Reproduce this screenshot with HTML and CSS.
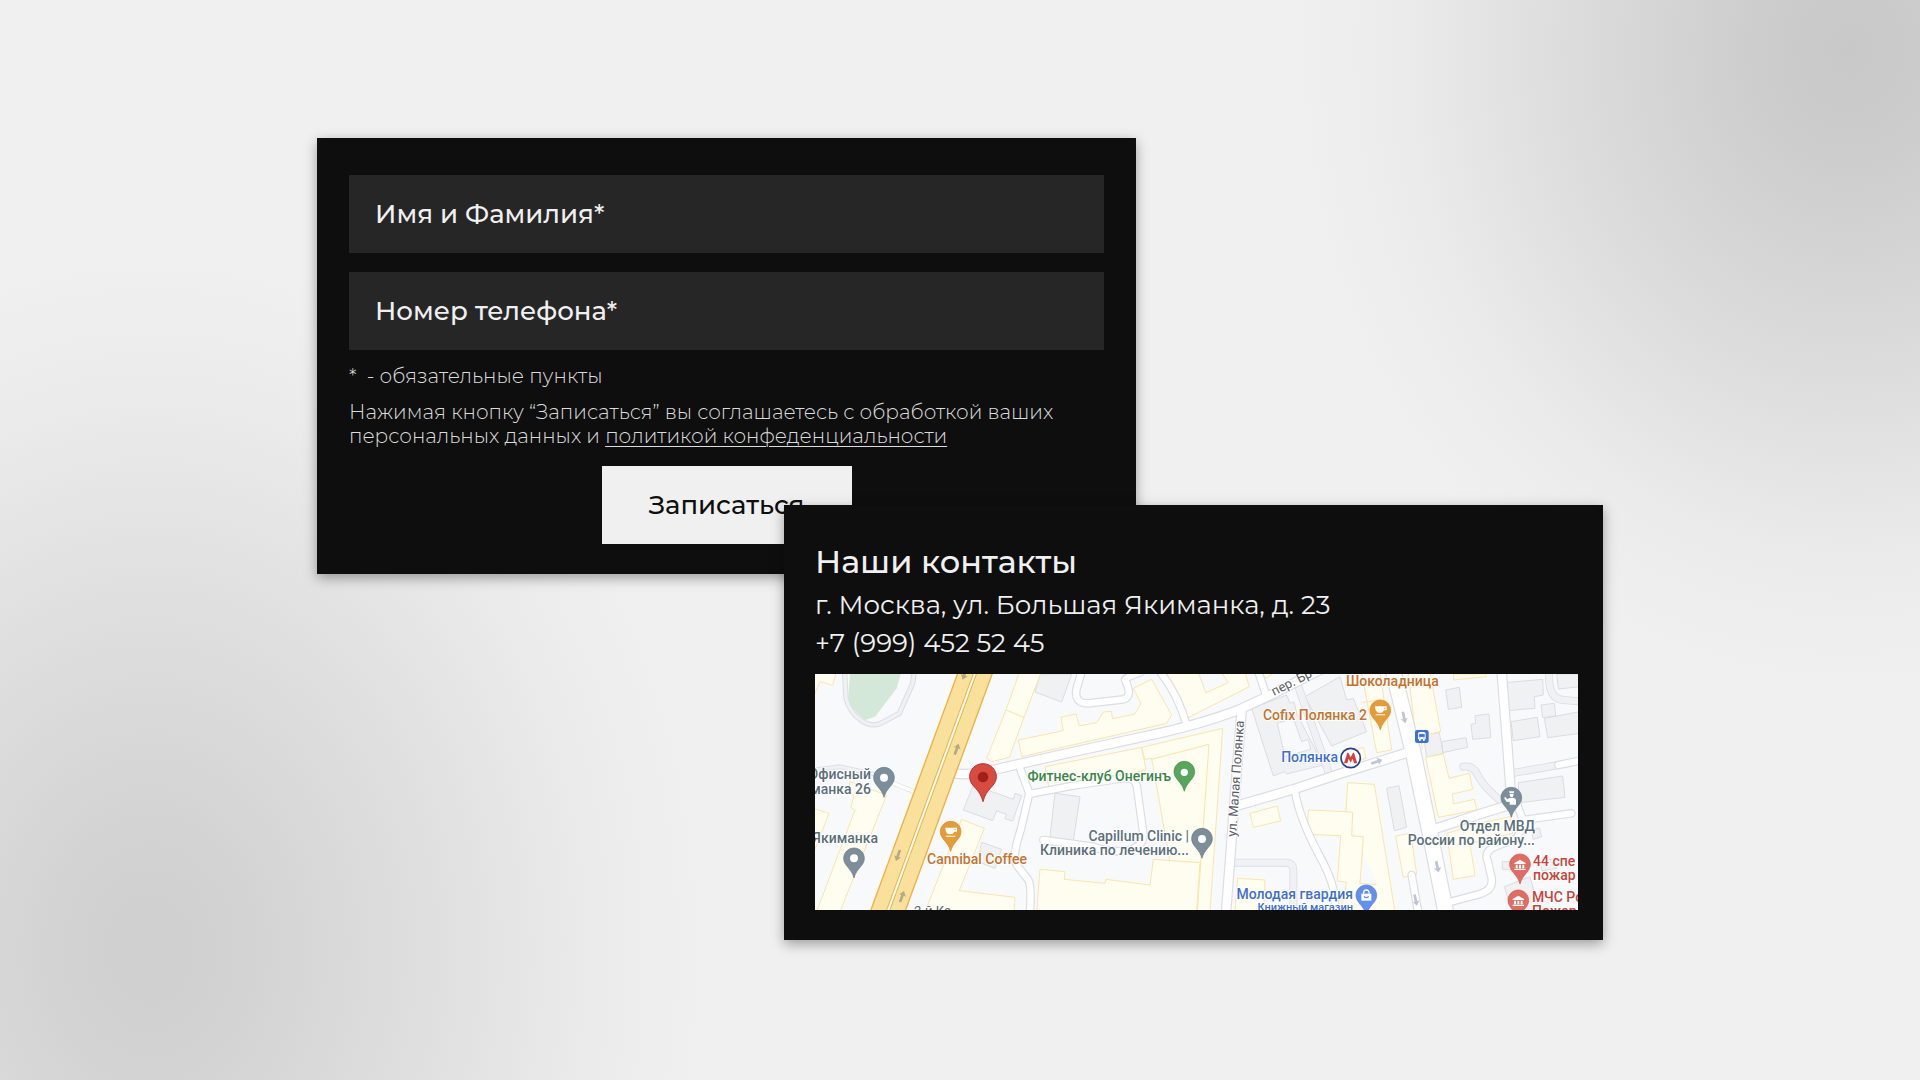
FILE: index.html
```html
<!DOCTYPE html>
<html lang="ru">
<head>
<meta charset="utf-8">
<meta name="viewport" content="width=device-width, initial-scale=1">
<title>Запись и контакты</title>
<link rel="stylesheet" href="styles.css">
</head>
<body>
<main class="stage">
  <form class="card card-form">
    <input class="field" type="text" name="name" placeholder="Имя и Фамилия*" aria-label="Имя и Фамилия" required>
    <input class="field" type="tel" name="phone" placeholder="Номер телефона*" aria-label="Номер телефона" required>
    <p class="note">*&nbsp; - обязательные пункты</p>
    <p class="consent">Нажимая кнопку “Записаться” вы соглашаетесь с обработкой ваших<br>персональных данных и <a class="link" href="#policy">политикой конфеденциальности</a></p>
    <button class="submit" type="submit">Записаться</button>
  </form>

  <section class="card card-contacts">
    <h2 class="title">Наши контакты</h2>
    <p class="contact">г. Москва, ул. Большая Якиманка, д. 23</p>
    <p class="contact">+7 (999) 452 52 45</p>
    <svg class="map" viewBox="0 0 763 236" role="img" aria-label="Карта проезда">
      <defs>
        <path id="pin" d="M0-31C-17-31-31-17-31 0C-31 23-7 30 0 59C7 30 31 23 31 0C31-17 17-31 0-31Z"/>
        <path id="arrow" d="M0-18L11-3L4-5V17H-4V-5L-11-3Z"/>
        <path id="cup" fill-rule="evenodd" d="M-16-12H19V0H11Q8 8-1 8Q-16 8-16-12ZM12-8V-4H15V-8ZM-14 12H14V15H-14Z"/>
        <path id="museum" d="M-17-6L0-16L17-6V-3H-17ZM-13-1H-7V10H-13ZM-3-1H3V10H-3ZM7-1H13V10H7ZM-17 11H17V15H-17Z"/>
      </defs>
      <rect class="land" width="763" height="236"/>
      <g transform="translate(-5 -4) scale(.33333)">
        <path class="park" d="M120 12L115 80Q118 115 165 150L195 140L260 55L272 12Z"/>
        <g class="block">
          <path d="M690 12H785L755 96L675 66Z"/>
          <path d="M490 345L610 388L615 370L635 377L608 453L585 446L590 434L560 422L548 452L460 420Z"/>
          <path d="M515 517L575 538L555 595L503 575Z"/>
          <path d="M735 370L810 380L790 512L720 500Z"/>
          <path d="M1325 115L1430 75L1440 100L1452 95L1460 130L1540 285L1430 312L1422 305L1390 318Z"/>
          <path d="M1485 80L1590 20L1610 90L1630 85L1670 185L1565 228Z"/>
          <path d="M1907 60L1948 52L1955 112L1915 118ZM1995 137L2037 132L2042 203L1988 208L1983 163L1997 160ZM2085 38L2198 28L2200 75L2173 80L2175 115L2092 122ZM2103 155L2182 142L2190 200L2110 212ZM2193 105L2233 100L2237 138L2198 143ZM2203 145L2310 125V190L2213 203ZM2240 12H2310V50L2245 57ZM2125 338L2258 318L2265 382L2128 398ZM1730 355L1767 347L1790 472L1753 482ZM1840 195L1888 188L1900 250L1850 262ZM1895 215L1968 203L1973 232L1898 248ZM2077 575H2130V598H2077ZM2083 650L2160 620L2190 722H2105ZM2165 480L2188 474L2195 500L2170 508ZM2190 575L2235 565L2240 595L2196 602Z"/>
        </g>
        <path class="yard" d="M1402 160L1450 145L1475 215L1495 208L1502 238L1425 260Z"/>
        <g class="shop">
          <path d="M10 8H78L68 46L30 35L10 80Z"/>
          <path d="M10 415L57 430L10 550ZM120 335L230 375L90 725H20L135 420L122 412L132 378L115 360Z"/>
          <path d="M455 448L523 475L448 662L615 682L612 725H345Z"/>
          <path d="M628 8H693L642 142L598 262L545 275L530 265L588 120ZM588 120L642 142"/>
          <path d="M625 210L760 182L753 142L798 132L808 168L860 158L880 126L904 124L908 146L975 132L993 100L970 55L1025 28L1085 135L1070 160L635 260Z"/>
          <path d="M705 290L995 232L1008 300L718 358Z"/>
          <path d="M995 232L1238 175L1200 725H1160L1162 580L1080 575L1025 265L1004 268ZM1025 268L1197 223L1162 725"/>
          <path d="M690 598L765 605L763 628L885 640L888 628L1020 645L1030 568L1170 578L1160 725H680Z"/>
          <path d="M1065 8H1305L1318 50L1130 145ZM1165 8L1188 68L1255 38L1235 8"/>
          <path d="M1355 8H1390L1368 25Z"/>
          <path d="M1655 8H1710L1745 240L1700 248ZM1655 98L1705 90"/>
          <path d="M1795 8H1860L1892 184L1832 200L1837 236L1822 240Z"/>
          <path d="M1640 240L1660 232L1668 265L1640 272Z"/>
          <path d="M1320 430L1402 408L1412 453L1330 472Z"/>
          <path d="M1495 420L1608 425L1613 338L1693 343L1755 725H1590L1610 637L1582 633L1592 497L1492 493ZM1608 425L1628 427L1625 498L1660 500L1650 640L1700 644"/>
          <path d="M1283 625L1365 630L1362 725H1275Z"/>
          <path d="M1847 262L1900 252L1917 325L1978 310L1988 358L1927 372L1930 402L1993 388L2000 420L1885 442Z"/>
          <path d="M1757 498L1802 490L1820 612L1780 622ZM1910 490L2030 455L2100 440L2108 490L1980 520L1995 617L1930 628ZM1930 12H2028V20L1932 30Z"/>
        </g>
        <g class="lane-edge" stroke-width="24">
          <path d="M104 8L108 85Q120 130 155 152Q190 175 220 156L268 130L308 40L312 8" stroke-width="16"/>
          <path d="M10 300L90 290L190 312" stroke-width="14"/>
          <path d="M1465 50L1555 305M1275 578H1430Q1450 580 1450 600V725M1960 290Q1990 285 2003 315T2080 400M2218 8Q2212 85 2260 90L2310 94M2115 308L2245 285"/>
        </g>
        <g class="lane" stroke-width="19">
          <path d="M104 8L108 85Q120 130 155 152Q190 175 220 156L268 130L308 40L312 8" stroke-width="10"/>
          <path d="M10 300L90 290L190 312" stroke-width="9"/>
          <path d="M1465 50L1555 305M1275 578H1430Q1450 580 1450 600V725M1960 290Q1990 285 2003 315T2080 400M2218 8Q2212 85 2260 90L2310 94M2115 308L2245 285"/>
        </g>
        <g class="road-edge">
          <path stroke-width="32" d="M440 311Q480 317 570 295L780 248L1000 200Q1170 165 1290 118L1380 76L1540 -5M1295 120L1273 400L1248 730M1285 406L1450 358L1600 308L1710 274L1800 245M2075 5L2090 200L2105 400M1880 475L2010 432L2120 398"/>
          <path stroke-width="26" d="M815 5L800 55Q790 100 835 100L940 88Q970 80 945 30Q945 22 990 8M1050 5Q1105 75 1130 165M630 295L658 370L632 480Q605 560 620 585L655 630Q665 645 660 730M658 372L800 345L940 325Q980 320 982 360L1000 490Q1003 525 960 540Q900 550 850 530L700 510M1345 5L1370 80M1455 365Q1470 450 1530 560T1570 730M2140 450L2284 430M1920 696L2010 672Q2050 660 2045 625L2030 560Q2028 540 2060 528L2120 505L2142 460L2122 405M1805 615L1825 730M2245 285L2310 272"/>
          <path stroke-width="14" d="M250 340L325 370"/>
          <path stroke-width="51" d="M1750 5L1810 250L1860 490L1908 730"/>
        </g>
        <g class="road">
          <path stroke-width="25" d="M440 311Q480 317 570 295L780 248L1000 200Q1170 165 1290 118L1380 76L1540 -5M1295 120L1273 400L1248 730M1285 406L1450 358L1600 308L1710 274L1800 245M2075 5L2090 200L2105 400M1880 475L2010 432L2120 398"/>
          <path stroke-width="19" d="M815 5L800 55Q790 100 835 100L940 88Q970 80 945 30Q945 22 990 8M1050 5Q1105 75 1130 165M630 295L658 370L632 480Q605 560 620 585L655 630Q665 645 660 730M658 372L800 345L940 325Q980 320 982 360L1000 490Q1003 525 960 540Q900 550 850 530L700 510M1345 5L1370 80M1455 365Q1470 450 1530 560T1570 730M2140 450L2284 430M1920 696L2010 672Q2050 660 2045 625L2030 560Q2028 540 2060 528L2120 505L2142 460L2122 405M1805 615L1825 730M2245 285L2310 272"/>
          <path stroke-width="10" d="M250 340L325 370"/>
          <path stroke-width="44" d="M1750 5L1810 250L1860 490L1908 730"/>
        </g>
        <path class="highway" d="M445 5L182 722H286L549 5Z"/>
        <path class="median-edge" d="M497 5L233 725"/>
        <path class="median" d="M497 5L233 725"/>
        <g class="flow-main">
          <use href="#arrow" transform="translate(464 12) rotate(200)"/>
          <use href="#arrow" transform="translate(440 238) rotate(20)"/>
          <use href="#arrow" transform="translate(264 556) rotate(200)"/>
          <use href="#arrow" transform="translate(276 680) rotate(20)"/>
        </g>
        <g class="flow">
          <use href="#arrow" transform="translate(1700 275) rotate(72)"/>
          <use href="#arrow" transform="translate(1782 142) rotate(168)"/>
          <use href="#arrow" transform="translate(1882 590) rotate(168)"/>
          <use href="#arrow" transform="translate(1817 690) rotate(168)"/>
        </g>
        <g class="pin-slate">
          <use href="#pin" x="222" y="323"/><use href="#pin" x="132" y="565"/><use href="#pin" x="1176" y="506"/><use href="#pin" x="2104" y="383"/>
        </g>
        <use class="pin-green" href="#pin" x="1123" y="305"/>
        <g class="pin-orange"><use href="#pin" x="422" y="485"/><use href="#pin" x="1711" y="121"/></g>
        <use class="pin-blue" href="#pin" x="1669" y="676"/>
        <g class="pin-red"><use href="#pin" x="2130" y="583"/><use href="#pin" x="2125" y="691"/></g>
        <g class="glyph">
          <circle cx="222" cy="323" r="12"/><circle cx="132" cy="565" r="12"/><circle cx="1176" cy="507" r="12"/><circle cx="1123" cy="307" r="11"/>
          <use href="#cup" x="422" y="485"/><use href="#cup" x="1711" y="121"/>
          <use href="#museum" x="2130" y="585"/><use href="#museum" x="2125" y="693"/>
          <path d="M2097 364H2113L2111 369H2099ZM2099 371H2111Q2111 382 2105 382T2099 371ZM2098 384H2112Q2118 386 2118 391V404H2099V395L2090 396L2082 384L2086 381L2093 388Z"/>
          <path d="M1654 671H1684V692H1654Z"/>
        </g>
        <path class="bag" d="M1661 671Q1660 660 1669 660T1677 671"/>
        <path class="bag-mark" d="M1662 679Q1669 687 1676 679"/>
        <path class="pin-main" d="M519 281C496 281 479 298 479 320C479 350 510 354 519 395C528 354 559 350 559 320C559 298 541 281 519 281Z"/>
        <circle class="pin-core" cx="519" cy="321" r="16"/>
        <circle class="metro" cx="1622" cy="264" r="29"/>
        <path class="metro-m" d="M1602 280L1612 248H1615L1622 262L1629 248H1632L1642 280H1632L1628 266L1622 278L1616 266L1612 280Z"/>
        <rect class="bus" x="1815" y="180" width="41" height="39" rx="7"/>
        <path class="glyph" d="M1824 191Q1824 186 1830 186H1841Q1847 186 1847 191V208H1844V213H1839V208H1832V213H1827V208H1824Z"/>
        <path class="bus-window" d="M1828 193H1843V200H1828ZM1828 204H1831M1840 204H1843"/>
      </g>
      <g class="label slate">
        <text x="56" y="105" text-anchor="end">Офисный</text>
        <text x="56" y="120" text-anchor="end">Якиманка 26</text>
        <text x="63" y="169" text-anchor="end">Якиманка</text>
        <text x="374" y="167" text-anchor="end">Capillum Clinic |</text>
        <text x="374" y="181" text-anchor="end">Клиника по лечению...</text>
        <text x="720" y="157" text-anchor="end">Отдел МВД</text>
        <text x="720" y="171" text-anchor="end">России по району...</text>
      </g>
      <text class="label green" x="356" y="107" text-anchor="end">Фитнес-клуб Онегинъ</text>
      <g class="label orange">
        <text x="112" y="190">Cannibal Coffee</text>
        <text x="552" y="46" text-anchor="end">Cofix Полянка 2</text>
        <text x="531" y="12">Шоколадница</text>
      </g>
      <g class="label blue">
        <text x="523" y="88" text-anchor="end">Полянка</text>
        <text x="538" y="225" text-anchor="end">Молодая гвардия</text>
        <text class="label-small" x="538" y="237" text-anchor="end">Книжный магазин</text>
      </g>
      <g class="label red">
        <text x="718" y="192">44 спе</text>
        <text x="718" y="206">пожар</text>
        <text x="717" y="228">МЧС Ро</text>
        <text x="717" y="242">Пожар</text>
      </g>
      <g class="label street">
        <text transform="translate(421 163) rotate(-86)">ул. Малая Полянка</text>
        <text transform="translate(459 22) rotate(-27)">пер. Бр</text>
        <text x="99" y="241">2-й Ка</text>
      </g>
    </svg>
  </section>
</main>
</body>
</html>
```
FILE: styles.css
```css
* { box-sizing: border-box; }

body {
  margin: 0;
  min-height: 100vh;
  font-family: "Montserrat", "Inter", sans-serif;
  color: #f0f0f0;
  background:
    radial-gradient(ellipse 560px 640px at 1850px 50px, #c8c8c8 0%, #cccccc 15%, #dcdcdc 50%, #ebebeb 80%, rgba(239, 239, 239, 0) 100%),
    radial-gradient(ellipse 560px 700px at 150px 950px, #cfcfcf 0%, #d2d2d2 15%, #dfdfdf 50%, #ebebeb 80%, rgba(239, 239, 239, 0) 100%),
    #f0f0f0;
}

.stage {
  display: flex;
  flex-direction: column;
  max-width: 1286px;
  margin: 0 auto;
  padding: 138px 0;
}

.card {
  display: flex;
  flex-direction: column;
  width: 100%;
  max-width: 819px;
  background: #0e0e0e;
  box-shadow: 0 4px 12px rgba(0, 0, 0, 0.35);
}

.card-form { padding: 37px 32px 30px; }

.card-contacts {
  position: relative;
  align-self: flex-end;
  margin-top: -69px;
  padding: 36px 25px 30px 31px;
}

.field {
  width: 100%;
  height: 78px;
  margin-bottom: 19px;
  padding: 0 26px;
  border: 0;
  border-radius: 0;
  background: #262626;
  color: #f0f0f0;
  font: 500 26px/36px "Montserrat", "Inter", sans-serif;
}

.field::placeholder { color: #f0f0f0; opacity: 1; }

.note,
.consent {
  margin: 0;
  color: #dcdcdc;
  font-size: 20px;
  font-weight: 300;
  line-height: 24px;
}

.note { margin-bottom: 12px; margin-top: -5px; }

.consent { margin-bottom: 18px; }

.link {
  color: inherit;
  text-decoration-thickness: 1px;
  text-underline-offset: 3px;
}

.submit {
  align-self: center;
  width: 250px;
  height: 78px;
  padding: 0;
  border: 0;
  background: #f0f0f0;
  color: #0e0e0e;
  font: 500 26px/36px "Montserrat", "Inter", sans-serif;
}

.title {
  margin: 0 0 3px;
  font-size: 32px;
  font-weight: 500;
  line-height: 42px;
}

.contact {
  margin: 0;
  font-size: 26px;
  font-weight: 400;
  line-height: 38px;
}

.map {
  display: block;
  width: 100%;
  height: auto;
  margin-top: 12px;
}

.land, .yard { fill: #f8f9fb; }
.park { fill: #d3e8d8; }
.block { fill: #f0f1f3; stroke: #dadce0; stroke-width: 3; }
.yard { stroke: #dadce0; stroke-width: 3; }
.shop { fill: #fffcf0; stroke: #fae5a8; stroke-width: 3; }
.lane, .lane-edge, .road, .road-edge { fill: none; stroke-linecap: round; stroke-linejoin: round; }
.lane { stroke: #f0f1f3; }
.lane-edge, .road-edge { stroke: #dcdde3; }
.road { stroke: #ffffff; }
.highway { fill: #f9e19b; stroke: #ecb244; stroke-width: 4; }
.median-edge { stroke: #ecb244; stroke-width: 12; }
.median { stroke: #ffffff; stroke-width: 6; }
.flow-main { fill: #b5a883; }
.flow { fill: #bfc3d6; }

.pin-slate { fill: #7b8e99; stroke: #657883; stroke-width: 2; }
.pin-green { fill: #56a65b; stroke: #3f8e48; stroke-width: 2; }
.pin-orange { fill: #e69c36; stroke: #d5892a; stroke-width: 2; }
.pin-blue { fill: #6290f0; stroke: #4b78dd; stroke-width: 2; }
.pin-red { fill: #e06c62; stroke: #cd564d; stroke-width: 2; }
.pin-main { fill: #d94b3f; stroke: #b8332b; stroke-width: 3; }
.pin-core { fill: #9f211d; }
.glyph { fill: #ffffff; stroke: none; }
.bag { fill: none; stroke: #ffffff; stroke-width: 4; }
.bag-mark { fill: none; stroke: #6290f0; stroke-width: 4; }
.metro { fill: #ffffff; stroke: #243f91; stroke-width: 5; }
.metro-m { fill: #d9423a; }
.bus { fill: #3c70dc; }
.bus-window { fill: #3c70dc; stroke: #3c70dc; stroke-width: 2; }

.label {
  font-family: "Roboto", sans-serif;
  font-size: 14px;
  font-weight: 500;
  paint-order: stroke;
  stroke: #ffffff;
  stroke-width: 2px;
  stroke-linejoin: round;
}

.label-small { font-size: 11px; }
.slate { fill: #5a6f7b; }
.green { fill: #3a8745; }
.orange { fill: #c9712a; }
.blue { fill: #3e6fd0; }
.red { fill: #cb4339; }
.street { fill: #5c6065; font-size: 13px; font-weight: 400; }
```
